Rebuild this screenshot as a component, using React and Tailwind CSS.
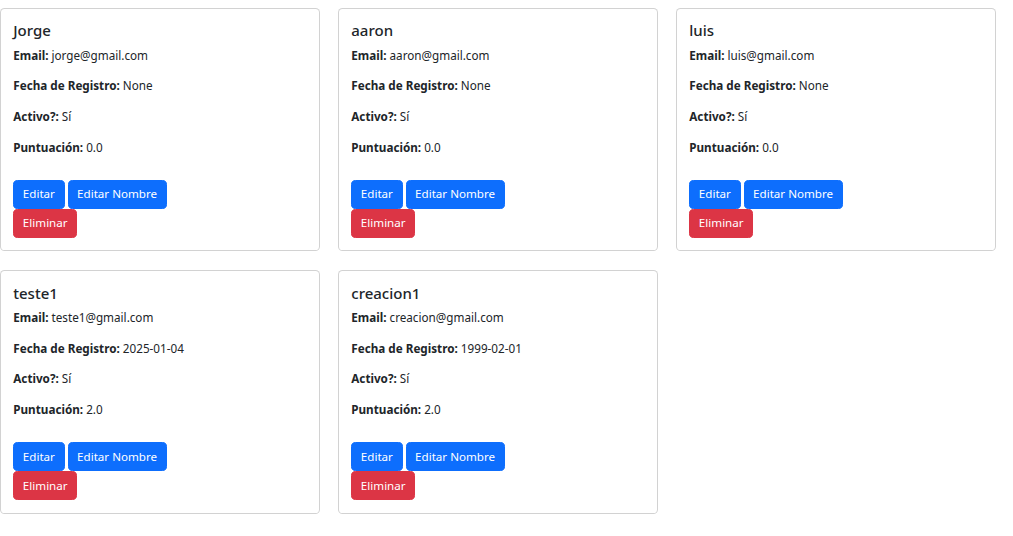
const users = [
  { nombre: 'Jorge', email: 'jorge@gmail.com', fecha: 'None', activo: 'Sí', puntuacion: '0.0' },
  { nombre: 'aaron', email: 'aaron@gmail.com', fecha: 'None', activo: 'Sí', puntuacion: '0.0' },
  { nombre: 'luis', email: 'luis@gmail.com', fecha: 'None', activo: 'Sí', puntuacion: '0.0' },
  { nombre: 'teste1', email: 'teste1@gmail.com', fecha: '2025-01-04', activo: 'Sí', puntuacion: '2.0' },
  { nombre: 'creacion1', email: 'creacion@gmail.com', fecha: '1999-02-01', activo: 'Sí', puntuacion: '2.0' },
];

function Field({ label, value }) {
  return (
    <p className="mb-[12.27px] text-[11.7px] leading-[18.4px]">
      <strong className="font-bold">{label}</strong> {value}
    </p>
  );
}

function UserCard({ user }) {
  return (
    <div className="w-[320px] rounded-[4.6px] border border-black/[0.175] bg-white">
      <div className="p-[12.27px]">
        <h5 className="mb-[6.1px] text-[15px] leading-[18.4px] font-medium">{user.nombre}</h5>
        <Field label="Email:" value={user.email} />
        <Field label="Fecha de Registro:" value={user.fecha} />
        <Field label="Activo?:" value={user.activo} />
        <Field label="Puntuación:" value={user.puntuacion} />
        <div className="w-[200px] pt-[11.6px] text-[11.6px] leading-[18.4px]">
          <button className="mr-[3px] rounded-[4.6px] border border-[#0d6efd] bg-[#0d6efd] px-[8.6px] py-[4.3px] text-white">
            Editar
          </button>
          <button className="mr-[3px] rounded-[4.6px] border border-[#0d6efd] bg-[#0d6efd] px-[8.6px] py-[4.3px] text-white">
            Editar Nombre
          </button>
          <button className="rounded-[4.6px] border border-[#dc3545] bg-[#dc3545] px-[8.6px] py-[4.3px] text-white">
            Eliminar
          </button>
        </div>
      </div>
    </div>
  );
}

export default function App() {
  return (
    <div className="min-h-screen bg-white pt-[8px] text-[#212529] font-['Noto_Sans',sans-serif]">
      <div className="flex w-[1000px] flex-wrap gap-x-[18px] gap-y-[19px]">
        {users.map((u) => (
          <UserCard key={u.nombre} user={u} />
        ))}
      </div>
    </div>
  );
}
